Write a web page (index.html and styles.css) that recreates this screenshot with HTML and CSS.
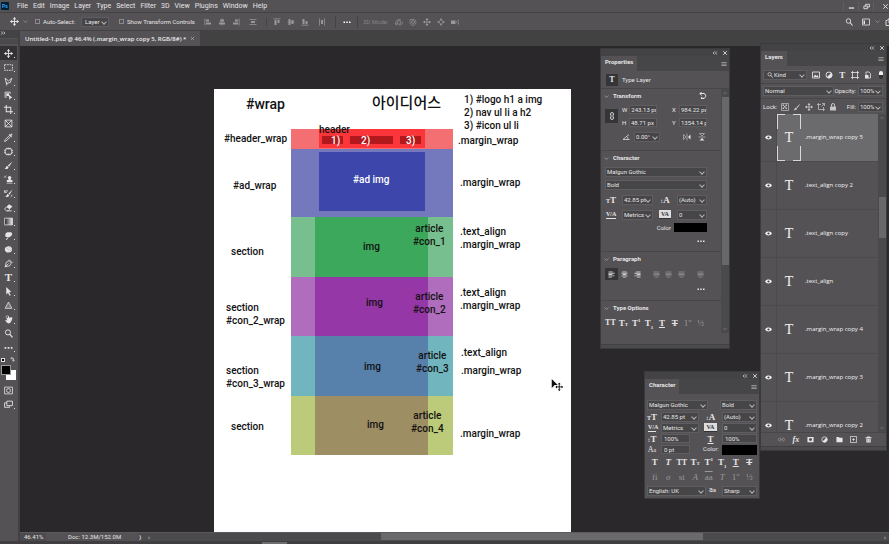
FILE: index.html
```html
<!DOCTYPE html>
<html lang="en">
<head>
<meta charset="utf-8">
<title>Untitled-1.psd</title>
<link rel="stylesheet" href="styles.css">
</head>
<body>
<svg class="defs" aria-hidden="true">
  <symbol id="move" viewBox="0 0 16 16"><path d="M8 1v14M1 8h14" stroke="currentColor" stroke-width="1.6"/><path d="M8 0l3 4H5zM8 16l3-4H5zM0 8l4-3v6zM16 8l-4-3v6z" fill="currentColor"/></symbol>
  <symbol id="slide" viewBox="0 0 16 16"><path d="M8 0l3 5H5zM8 16l3-5H5zM0 8l5-3v6zM16 8l-5-3v6z" fill="currentColor"/></symbol>
  <symbol id="marquee" viewBox="0 0 16 16"><path d="M1 3h14v10H1z" fill="none" stroke="currentColor" stroke-width="1.5" stroke-dasharray="3 1.5"/></symbol>
  <symbol id="lasso" viewBox="0 0 16 16"><path d="M5 13L2 2l6 5 6-5-3 8-5 1-2 4M6 11l-3-1" fill="none" stroke="currentColor" stroke-width="1.5"/></symbol>
  <symbol id="select" viewBox="0 0 16 16"><path d="M11 5V2H2v9h3" fill="none" stroke="currentColor" stroke-width="1.5"/><path d="M4 4h5v5H4z" fill="currentColor"/><path d="M8 6l7 6-3 .5L10 16z" fill="currentColor"/></symbol>
  <symbol id="crop" viewBox="0 0 16 16"><path d="M4 0v12h12M0 4h12v12" fill="none" stroke="currentColor" stroke-width="1.8"/></symbol>
  <symbol id="frame" viewBox="0 0 16 16"><path d="M2 2h12v12H2zM2 2l12 12M14 2L2 14" fill="none" stroke="currentColor" stroke-width="1.5"/></symbol>
  <symbol id="dropper" viewBox="0 0 16 16"><path d="M9 5l-7 7-1 3 3-1 7-7" fill="none" stroke="currentColor" stroke-width="1.5"/><path d="M8 3l5 5 1-2-1-1 2-3-1-1-3 2-1-1z" fill="currentColor"/></symbol>
  <symbol id="heal" viewBox="0 0 16 16"><rect x="2" y="3" width="12" height="10" rx="3" fill="none" stroke="currentColor" stroke-width="1.7"/><path d="M5 1v3M8 1v3M11 1v3M5 12v3M8 12v3M11 12v3M0 6h3M0 10h3M13 6h3M13 10h3" stroke="currentColor" stroke-width="1.2"/></symbol>
  <symbol id="brush" viewBox="0 0 16 16"><path d="M15 1L7 8l2 2zM6 9c-3 0-2 4-5 5 3 1 7 0 7-3z" fill="currentColor"/></symbol>
  <symbol id="stamp" viewBox="0 0 16 16"><path d="M8 7a3 3 0 1 1 4 0v2h3v4H5V9h3zM5 14h10v1H5z" fill="currentColor"/><path d="M0 1l4 4M4 1L0 5" stroke="currentColor"/></symbol>
  <symbol id="history" viewBox="0 0 16 16"><path d="M15 1L8 8l2 2zM7 9c-2 0-2 4-5 5 3 1 7 0 7-3z" fill="currentColor"/><path d="M1 6c1-3 4-4 6-2M1 2v4h4M12 14c2-1 2-3 2-4" fill="none" stroke="currentColor" stroke-width="1.4"/></symbol>
  <symbol id="eraser" viewBox="0 0 16 16"><path d="M9 2l6 4-5 5-6-4z" fill="currentColor"/><path d="M4 7l-3 4 4 3h3l2-3M5 14h9" fill="none" stroke="currentColor" stroke-width="1.4"/></symbol>
  <symbol id="gradient" viewBox="0 0 16 16"><linearGradient id="gr"><stop stop-color="#222"/><stop offset="1" stop-color="#eee"/></linearGradient><path d="M1 2h14v12H1z" fill="url(#gr)" stroke="currentColor" stroke-width="1.3"/></symbol>
  <symbol id="smudge" viewBox="0 0 16 16"><path d="M3 15l4-4-4-1c-2-3 0-8 4-8h6c3 3 1 6-2 8l-3 1-3 5z" fill="currentColor"/></symbol>
  <symbol id="sponge" viewBox="0 0 16 16"><path d="M2 5c4-4 11-4 12 1 1 4-1 7-5 7-5 2-9-3-7-8z" fill="currentColor"/><path d="M5 6h1M9 5h1M7 9h1M11 9h1" stroke="#555" stroke-width="1.3"/></symbol>
  <symbol id="pen" viewBox="0 0 16 16"><path d="M2 14l2-8 5-3 4 4-3 5zM2 14l6-6M9 1l6 6" fill="none" stroke="currentColor" stroke-width="1.5"/></symbol>
  <symbol id="arrow" viewBox="0 0 16 16"><path d="M4 0l9 9-4 .5 3 5-2 1-3-5-3 3z" fill="currentColor"/></symbol>
  <symbol id="triangle" viewBox="0 0 16 16"><path d="M8 2l6 11H2z" fill="#777" stroke="currentColor" stroke-width="1.4"/></symbol>
  <symbol id="hand" viewBox="0 0 16 16"><path d="M2 9c2-1 3 1 4 1L4 5c1-2 2 0 3 1V2c2-1 2 1 2 3 2-1 5-2 6 0-1 5-3 9-6 10-3 0-5-2-7-6z" fill="currentColor"/><path d="M2 4c2-3 5-3 6-2M12 10l-2 3" stroke="currentColor" fill="none"/></symbol>
  <symbol id="search" viewBox="0 0 16 16"><circle cx="7" cy="6" r="4.5" fill="none" stroke="currentColor" stroke-width="1.7"/><path d="M10 9l5 6" stroke="currentColor" stroke-width="2.2"/></symbol>
  <symbol id="dots" viewBox="0 0 16 16"><path d="M1 7h3v3H1zM6.500 7h3v3h-3zM12 7h3v3h-3z" fill="currentColor"/></symbol>
  <symbol id="mask" viewBox="0 0 16 16"><path d="M1 2h14v12H1z" fill="none" stroke="currentColor" stroke-width="1.4"/><circle cx="8" cy="8" r="3.500" fill="none" stroke="currentColor" stroke-width="1.4"/></symbol>
  <symbol id="screens" viewBox="0 0 16 16"><path d="M5 2h10v8H5zM5 5H1v8h9v-3" fill="none" stroke="currentColor" stroke-width="1.5"/></symbol>
  <symbol id="swap" viewBox="0 0 16 16"><path d="M4 4h7v8M7 0L3 4l4 4M7 9l4 5 4-5" fill="none" stroke="currentColor" stroke-width="2.2"/></symbol>
  <symbol id="al-l" viewBox="0 0 16 16"><path d="M1 1h1.500v14H1zM4 3h6v4H4zM4 9h10v4H4z" fill="currentColor"/></symbol>
  <symbol id="al-c" viewBox="0 0 16 16"><path d="M7.300 1h1.500v14H7.300zM4 3h8v4H4zM2 9h12v4H2z" fill="currentColor"/></symbol>
  <symbol id="al-r" viewBox="0 0 16 16"><path d="M13.500 1H15v14h-1.500zM6 3h6v4H6zM2 9h10v4H2z" fill="currentColor"/></symbol>
  <symbol id="al-h" viewBox="0 0 16 16"><path d="M1 2h14v1.500H1zM4 6h8v4H4zM1 12.500h14V14H1z" fill="currentColor"/></symbol>
  <symbol id="al-v" viewBox="0 0 16 16"><path d="M2 1h1.500v14H2zM6 4h4v8H6zM12.500 1H14v14h-1.500z" fill="currentColor"/></symbol>
  <symbol id="al-t" viewBox="0 0 16 16"><path d="M1 1h14v1.500H1zM3 4h4v10H3zM9 4h4v6H9z" fill="currentColor"/></symbol>
  <symbol id="al-m" viewBox="0 0 16 16"><path d="M1 7.300h14v1.500H1zM3 2h4v12H3zM9 4h4v8H9z" fill="currentColor"/></symbol>
  <symbol id="al-b" viewBox="0 0 16 16"><path d="M1 13.500h14V15H1zM3 2h4v10H3zM9 6h4v6H9z" fill="currentColor"/></symbol>
  <symbol id="orbit" viewBox="0 0 16 16"><circle cx="8" cy="9" r="3.500" fill="none" stroke="currentColor" stroke-width="1.4"/><path d="M2 12C-1 5 8 1 12 4M8 14c5 1 8-3 6-7M1 10l1 4 3-2" fill="none" stroke="currentColor" stroke-width="1.4"/></symbol>
  <symbol id="roll" viewBox="0 0 16 16"><circle cx="8" cy="8" r="3" fill="none" stroke="currentColor" stroke-width="1.4"/><path d="M2 3h4M2 3v4M2 8a6 6 0 1 0 4-5" fill="none" stroke="currentColor" stroke-width="1.4"/></symbol>
  <symbol id="camera" viewBox="0 0 16 16"><path d="M0 5h9v7H0z" fill="currentColor"/><path d="M10 8l5-4v9z" fill="none" stroke="currentColor"/></symbol>
  <symbol id="layout" viewBox="0 0 16 16"><path d="M1 2h14v12H1z" fill="none" stroke="currentColor" stroke-width="1.6"/><path d="M3 5h3v7H3z" fill="currentColor"/></symbol>
  <symbol id="share" viewBox="0 0 16 16"><path d="M5 5H2v10h12V8M8 10V1M5 4l3-3 3 3" fill="none" stroke="currentColor" stroke-width="1.8"/></symbol>
  <symbol id="min" viewBox="0 0 16 16"><path d="M2 10h12v3H2z" fill="currentColor"/></symbol>
  <symbol id="restore" viewBox="0 0 16 16"><path d="M2 7h8v6H2zM6 7V3h9v6h-5" fill="none" stroke="currentColor" stroke-width="2"/></symbol>
  <symbol id="x" viewBox="0 0 16 16"><path d="M3 3l10 10M13 3L3 13" stroke="currentColor" stroke-width="2.200"/></symbol>
  <symbol id="collapse" viewBox="0 0 16 16"><path d="M7 4L3 8l4 4M13 4L9 8l4 4" fill="none" stroke="currentColor" stroke-width="2"/></symbol>
  <symbol id="expand" viewBox="0 0 16 16"><path d="M3 4l4 4-4 4M9 4l4 4-4 4" fill="none" stroke="currentColor" stroke-width="2"/></symbol>
  <symbol id="menu" viewBox="0 0 16 16"><path d="M1 3h14v2H1zM1 7h14v2H1zM1 11h14v2H1z" fill="currentColor"/></symbol>
  <symbol id="down" viewBox="0 0 16 16"><path d="M2 5l6 6 6-6" fill="none" stroke="currentColor" stroke-width="2"/></symbol>
  <symbol id="up" viewBox="0 0 16 16"><path d="M2 11l6-6 6 6" fill="none" stroke="currentColor" stroke-width="2"/></symbol>
  <symbol id="reset" viewBox="0 0 16 16"><path d="M2 3h8a5 5 0 1 1-6 7M5 0L2 3l3 4" fill="none" stroke="currentColor" stroke-width="2"/><path d="M4 13h6" stroke="currentColor" stroke-width="2"/></symbol>
  <symbol id="chain" viewBox="0 0 16 16"><path d="M5 7V4a3 3 0 0 1 6 0v3M5 9v3a3 3 0 0 0 6 0V9M8 5v6" fill="none" stroke="currentColor" stroke-width="1.700"/></symbol>
  <symbol id="link" viewBox="0 0 16 16"><path d="M7 5H4a3 3 0 0 0 0 6h3M9 5h3a3 3 0 0 1 0 6H9M5 8h6" fill="none" stroke="currentColor" stroke-width="1.5"/></symbol>
  <symbol id="angle" viewBox="0 0 16 16"><path d="M14 3L2 13h13M9 7c2 1 3 3 3 6" fill="none" stroke="currentColor" stroke-width="1.5"/></symbol>
  <symbol id="flip-h" viewBox="0 0 16 16"><path d="M1 3l5 5-5 5z" fill="none" stroke="currentColor"/><path d="M7.500 1h1v14h-1zM15 3l-5 5 5 5z" fill="currentColor"/></symbol>
  <symbol id="flip-v" viewBox="0 0 16 16"><path d="M3 1l5 5 5-5z" fill="none" stroke="currentColor"/><path d="M1 7.500h14v1H1zM3 15l5-5 5 5z" fill="currentColor"/></symbol>
  <symbol id="tx-l" viewBox="0 0 16 16"><path d="M1 1h10v2H1zM1 4h14v2H1zM1 7h9v2H1zM1 10h14v2H1zM1 13h8v2H1z" fill="currentColor"/></symbol>
  <symbol id="tx-c" viewBox="0 0 16 16"><path d="M3 1h10v2H3zM1 4h14v2H1zM4 7h8v2H4zM1 10h14v2H1zM4 13h8v2H4z" fill="currentColor"/></symbol>
  <symbol id="tx-r" viewBox="0 0 16 16"><path d="M5 1h10v2H5zM1 4h14v2H1zM6 7h9v2H6zM1 10h14v2H1zM7 13h8v2H7z" fill="currentColor"/></symbol>
  <symbol id="tx-j" viewBox="0 0 16 16"><path d="M1 1h14v2H1zM1 4h14v2H1zM1 7h14v2H1zM1 10h14v2H1zM4 13h8v2H4z" fill="currentColor"/></symbol>
  <symbol id="image" viewBox="0 0 16 16"><path d="M1 2h14v12H1z" fill="none" stroke="currentColor" stroke-width="1.700"/><path d="M3 12l3-5 3 3 2-2 2 4z" fill="currentColor"/></symbol>
  <symbol id="adjust" viewBox="0 0 16 16"><circle cx="8" cy="8" r="6" fill="none" stroke="currentColor" stroke-width="1.800"/><path d="M12.500 3.500a6 6 0 0 1-9 9z" fill="currentColor"/></symbol>
  <symbol id="shape" viewBox="0 0 16 16"><path d="M3 0v16M13 0v16M0 3h16M0 13h16" fill="none" stroke="currentColor" stroke-width="1.600"/></symbol>
  <symbol id="smart" viewBox="0 0 16 16"><path d="M4 8V2h6l3 3v9H8" fill="none" stroke="currentColor" stroke-width="1.600"/><path d="M2 8h7v7H2z" fill="currentColor"/></symbol>
  <symbol id="checker" viewBox="0 0 16 16"><path d="M1 1h14v14H1z" fill="none" stroke="currentColor" stroke-width="1.400"/><path d="M3 3h3v3H3zM9 3h3v3H9zM6 6h3v3H6zM3 9h3v3H3zM9 9h3v3H9z" fill="currentColor"/></symbol>
  <symbol id="lock" viewBox="0 0 16 16"><path d="M5 7V4a3 3 0 0 1 6 0v3" fill="none" stroke="currentColor" stroke-width="2"/><path d="M2 7h12v8H2z" fill="currentColor"/></symbol>
  <symbol id="artlock" viewBox="0 0 16 16"><path d="M3 0v13h13M0 3h8M13 8v8M9 7l6-6M10 1h5v5" fill="none" stroke="currentColor" stroke-width="1.500"/></symbol>
  <symbol id="eye" viewBox="0 0 16 16"><path d="M0 8c4-6 12-6 16 0-4 6-12 6-16 0z" fill="currentColor"/><circle cx="8" cy="8" r="2.500" fill="#444"/></symbol>
  <symbol id="addmask" viewBox="0 0 16 16"><path fill-rule="evenodd" d="M1 2h14v12H1zM8 4.500a3.500 3.500 0 1 0 .01 0z" fill="currentColor"/></symbol>
  <symbol id="folder" viewBox="0 0 16 16"><path d="M1 2h5l2 2h7v10H1z" fill="currentColor"/></symbol>
  <symbol id="new" viewBox="0 0 16 16"><path d="M1 1h14v14H1zM8 5v6M5 8h6" fill="none" stroke="currentColor" stroke-width="1.700"/></symbol>
  <symbol id="trash" viewBox="0 0 16 16"><path d="M1 3h14v2H1zM5 1h6v2H5zM3 6h10v9H3z" fill="currentColor"/><path d="M6 7v6M10 7v6" stroke="#555"/></symbol>
  <symbol id="pointer" viewBox="0 0 16 16"><path d="M1 0l8 8H5l-4 4z" fill="#111"/><path d="M11 6v9M6.500 10.500h9" stroke="#111" stroke-width="1.200"/><path d="M11 5l2 2H9zM11 16l2-2H9zM6 10.500l2-2v4zM16 10.500l-2-2v4z" fill="#111"/></symbol>
</svg>

<header class="menubar">
  <span class="logo">Ps</span>
  <nav class="menus">
    <a href="#">File</a><a href="#">Edit</a><a href="#">Image</a><a href="#">Layer</a><a href="#">Type</a><a href="#">Select</a><a href="#">Filter</a><a href="#">3D</a><a href="#">View</a><a href="#">Plugins</a><a href="#">Window</a><a href="#">Help</a>
  </nav>
  <div class="window-buttons">
    <button aria-label="Minimize"><svg><use href="#min"/></svg></button>
    <button aria-label="Restore"><svg><use href="#restore"/></svg></button>
    <button aria-label="Close"><svg><use href="#x"/></svg></button>
  </div>
</header>

<div class="options">
  <svg class="icon-l"><use href="#move"/></svg>
  <svg class="chev"><use href="#down"/></svg>
  <label class="check auto"><input type="checkbox">Auto-Select:</label>
  <span class="pick opt-layer"><select aria-label="Auto-select target"><option>Layer</option></select></span>
  <label class="check show"><input type="checkbox">Show Transform Controls</label>
  <div class="tools-group first">
    <button aria-label="Align left"><svg><use href="#al-l"/></svg></button>
    <button aria-label="Align centers"><svg><use href="#al-c"/></svg></button>
    <button aria-label="Align right"><svg><use href="#al-r"/></svg></button>
  </div>
  <button class="spread" aria-label="Distribute"><svg><use href="#al-h"/></svg></button>
  <div class="tools-group second">
    <button aria-label="Align top"><svg><use href="#al-t"/></svg></button>
    <button aria-label="Align middle"><svg><use href="#al-m"/></svg></button>
    <button aria-label="Align bottom"><svg><use href="#al-b"/></svg></button>
  </div>
  <button class="spread" aria-label="Distribute horizontally"><svg><use href="#al-v"/></svg></button>
  <button class="more" aria-label="More options"><svg><use href="#dots"/></svg></button>
  <span class="mode">3D Mode:</span>
  <div class="tools-group">
    <button aria-label="Orbit"><svg><use href="#orbit"/></svg></button>
    <button aria-label="Roll"><svg><use href="#roll"/></svg></button>
    <button aria-label="Pan"><svg><use href="#move"/></svg></button>
    <button aria-label="Slide"><svg><use href="#slide"/></svg></button>
    <button aria-label="Camera"><svg><use href="#camera"/></svg></button>
  </div>
  <div class="right-tools">
    <button aria-label="Search"><svg><use href="#search"/></svg></button>
    <button aria-label="Workspace"><svg><use href="#layout"/></svg></button>
    <svg class="chev"><use href="#down"/></svg>
    <button class="share" aria-label="Share"><svg><use href="#share"/></svg></button>
  </div>
</div>

<div class="body">
  <aside class="toolbar">
    <div class="tool-head"><svg><use href="#expand"/></svg></div>
    <div class="grip"></div>
    <button class="tool on" aria-label="Move"><svg><use href="#move"/></svg></button>
    <button class="tool" aria-label="Marquee"><svg><use href="#marquee"/></svg></button>
    <button class="tool" aria-label="Lasso"><svg><use href="#lasso"/></svg></button>
    <button class="tool" aria-label="Object selection"><svg><use href="#select"/></svg></button>
    <button class="tool" aria-label="Crop"><svg><use href="#crop"/></svg></button>
    <button class="tool solo" aria-label="Frame"><svg><use href="#frame"/></svg></button>
    <button class="tool" aria-label="Eyedropper"><svg><use href="#dropper"/></svg></button>
    <button class="tool" aria-label="Healing"><svg><use href="#heal"/></svg></button>
    <button class="tool" aria-label="Brush"><svg><use href="#brush"/></svg></button>
    <button class="tool" aria-label="Stamp"><svg><use href="#stamp"/></svg></button>
    <button class="tool" aria-label="History brush"><svg><use href="#history"/></svg></button>
    <button class="tool" aria-label="Eraser"><svg><use href="#eraser"/></svg></button>
    <button class="tool" aria-label="Gradient"><svg><use href="#gradient"/></svg></button>
    <button class="tool" aria-label="Smudge"><svg><use href="#smudge"/></svg></button>
    <button class="tool" aria-label="Sponge"><svg><use href="#sponge"/></svg></button>
    <button class="tool" aria-label="Pen"><svg><use href="#pen"/></svg></button>
    <button class="tool letter">T</button>
    <button class="tool" aria-label="Path selection"><svg><use href="#arrow"/></svg></button>
    <button class="tool" aria-label="Triangle"><svg><use href="#triangle"/></svg></button>
    <button class="tool" aria-label="Hand"><svg><use href="#hand"/></svg></button>
    <button class="tool solo" aria-label="Zoom"><svg><use href="#search"/></svg></button>
    <button class="tool" aria-label="Edit toolbar"><svg><use href="#dots"/></svg></button>
    <div class="mini"><i class="mini-sw"></i><svg><use href="#swap"/></svg></div>
    <div class="swatches"><i class="bg"></i><i class="fg"></i></div>
    <button class="tool solo" aria-label="Quick mask"><svg><use href="#mask"/></svg></button>
    <button class="tool" aria-label="Screen mode"><svg><use href="#screens"/></svg></button>
  </aside>

  <main class="document">
    <div class="tabs"><div class="tab"><span>Untitled-1.psd @ 46.4% (.margin_wrap copy 5, RGB/8#) *</span><button aria-label="Close document"><svg><use href="#x"/></svg></button></div></div>
    <div class="workspace">
      <div class="artboard">
        <div class="diagram">
          <div class="band red"><div class="inner"><i></i><i></i><i></i></div></div>
          <div class="band indigo"><div class="inner"></div></div>
          <div class="band green"><div class="inner"></div></div>
          <div class="band purple"><div class="inner"></div></div>
          <div class="band blue"><div class="inner"></div></div>
          <div class="band olive"><div class="inner"></div></div>
        </div>
        <p class="note big n-wrap">#wrap</p>
        <p class="note big n-title" lang="ko">아이디어스</p>
        <p class="note n-list">1) #logo h1 a img<br>2) nav ul li a h2<br>3) #icon ul li</p>
        <p class="note n-header">header</p>
        <p class="note white n-one">1)</p><p class="note white n-two">2)</p><p class="note white n-three">3)</p>
        <p class="note n-hwrap">#header_wrap</p>
        <p class="note n-m1">.margin_wrap</p>
        <p class="note n-adwrap">#ad_wrap</p>
        <p class="note white n-ad">#ad img</p>
        <p class="note n-m2">.margin_wrap</p>
        <p class="note n-s1">section</p><p class="note n-i1">img</p><p class="note center n-c1">article<br>#con_1</p><p class="note n-t1">.text_align<br>.margin_wrap</p>
        <p class="note n-s2">section<br>#con_2_wrap</p><p class="note n-i2">img</p><p class="note center n-c2">article<br>#con_2</p><p class="note n-t2">.text_align<br>.margin_wrap</p>
        <p class="note n-s3">section<br>#con_3_wrap</p><p class="note n-i3">img</p><p class="note center n-c3">article<br>#con_3</p><p class="note n-t3">.text_align</p><p class="note n-m4">.margin_wrap</p>
        <p class="note n-s4">section</p><p class="note n-i4">img</p><p class="note center n-c4">article<br>#con_4</p><p class="note n-m5">.margin_wrap</p>
        <svg class="pointer"><use href="#pointer"/></svg>
      </div>
    </div>
    <footer class="status"><span class="zoom">46.41%</span><span class="doc">Doc: 12.3M/152.0M</span><span class="more-info">❭</span><span class="scroll-left">‹</span><div class="hscroll"><i></i></div><span class="scroll-right">›</span></footer>
  </main>
</div>
<div class="bottom"><i></i></div>

<section class="panel properties">
  <div class="panel-top"><svg><use href="#collapse"/></svg><svg><use href="#x"/></svg></div>
  <div class="panel-tabs"><h2>Properties</h2><svg><use href="#menu"/></svg></div>
  <div class="type-row"><b class="tbox">T</b>Type Layer</div>
  <div class="prop-body">
    <div class="prop-main">
      <section class="transform">
        <h3><svg><use href="#down"/></svg>Transform<svg class="reset"><use href="#reset"/></svg></h3>
        <div class="tf">
          <button class="chain" aria-label="Link size"><svg><use href="#chain"/></svg></button>
          <div class="fields">
            <label>W<input value="243.13 px"></label><label>X<input value="984.22 px"></label>
            <label>H<input value="48.71 px"></label><label>Y<input value="1354.14 px"></label>
          </div>
        </div>
        <div class="angle"><svg><use href="#angle"/></svg><span class="pick"><select aria-label="Angle"><option>0.00°</option></select></span><svg class="fh"><use href="#flip-h"/></svg><svg><use href="#flip-v"/></svg></div>
      </section>
      <section class="chars">
        <h3><svg><use href="#down"/></svg>Character</h3>
        <span class="pick wide"><select aria-label="Font"><option>Malgun Gothic</option></select></span>
        <span class="pick wide"><select aria-label="Weight"><option>Bold</option></select></span>
        <div class="pairs">
          <span class="gl"><small>T</small>T</span><span class="pick"><select aria-label="Size"><option>42.85 pt</option></select></span>
          <span class="gl"><small>↕</small>A</span><span class="pick"><select aria-label="Leading"><option>(Auto)</option></select></span>
          <span class="gl va">V/A</span><span class="pick"><select aria-label="Kerning"><option>Metrics</option></select></span>
          <span class="gl va inv">VA</span><span class="pick"><select aria-label="Tracking"><option>0</option></select></span>
        </div>
        <div class="color">Color<button aria-label="Text color"></button></div>
        <div class="dots"><svg><use href="#dots"/></svg></div>
      </section>
      <section class="para">
        <h3><svg><use href="#down"/></svg>Paragraph</h3>
        <div class="aligns">
          <button class="on" aria-label="Left"><svg><use href="#tx-l"/></svg></button><button aria-label="Center"><svg><use href="#tx-c"/></svg></button><button aria-label="Right"><svg><use href="#tx-r"/></svg></button>
          <button class="dim gap" aria-label="Justify left"><svg><use href="#tx-j"/></svg></button><button class="dim" aria-label="Justify center"><svg><use href="#tx-j"/></svg></button><button class="dim" aria-label="Justify right"><svg><use href="#tx-j"/></svg></button>
          <button class="dim gap" aria-label="Justify all"><svg><use href="#tx-j"/></svg></button>
        </div>
        <div class="dots"><svg><use href="#dots"/></svg></div>
      </section>
      <section class="topts">
        <h3><svg><use href="#down"/></svg>Type Options</h3>
        <div class="glyphs"><b>TT</b><b>T<small>T</small></b><b>T<sup>1</sup></b><b>T<sub>1</sub></b><b class="u">T</b><b class="s">T</b><span>1<sup>st</sup></span><span>½</span></div>
      </section>
    </div>
    <div class="vscroll"><svg><use href="#up"/></svg><i></i><svg class="end"><use href="#down"/></svg></div>
  </div>
  <div class="panel-grip"></div>
</section>

<section class="panel layers">
  <div class="panel-top"><svg><use href="#collapse"/></svg><svg><use href="#x"/></svg></div>
  <div class="panel-tabs"><h2>Layers</h2><svg><use href="#menu"/></svg></div>
  <div class="bar filter">
    <span class="pick kind"><svg><use href="#search"/></svg><select aria-label="Filter kind"><option>Kind</option></select></span>
    <svg><use href="#image"/></svg><svg><use href="#adjust"/></svg><b>T</b><svg><use href="#shape"/></svg><svg><use href="#smart"/></svg><i class="toggle"></i>
  </div>
  <div class="bar">
    <span class="pick blend"><select aria-label="Blend mode"><option>Normal</option></select></span>
    <label class="pct">Opacity:<span class="pick"><select><option>100%</option></select></span></label>
  </div>
  <div class="bar locks">
    <span>Lock:</span><svg><use href="#checker"/></svg><svg><use href="#brush"/></svg><svg><use href="#move"/></svg><svg><use href="#artlock"/></svg><svg><use href="#lock"/></svg>
    <label class="pct">Fill:<span class="pick"><select><option>100%</option></select></span></label>
  </div>
  <div class="layer-body">
    <ul>
      <li class="on"><button aria-label="Visibility"><svg><use href="#eye"/></svg></button><b class="thumb">T</b><span>.margin_wrap copy 5</span></li>
      <li><button aria-label="Visibility"><svg><use href="#eye"/></svg></button><b class="thumb">T</b><span>.text_align copy 2</span></li>
      <li><button aria-label="Visibility"><svg><use href="#eye"/></svg></button><b class="thumb">T</b><span>.text_align copy</span></li>
      <li><button aria-label="Visibility"><svg><use href="#eye"/></svg></button><b class="thumb">T</b><span>.text_align</span></li>
      <li><button aria-label="Visibility"><svg><use href="#eye"/></svg></button><b class="thumb">T</b><span>.margin_wrap copy 4</span></li>
      <li><button aria-label="Visibility"><svg><use href="#eye"/></svg></button><b class="thumb">T</b><span>.margin_wrap copy 3</span></li>
      <li><button aria-label="Visibility"><svg><use href="#eye"/></svg></button><b class="thumb">T</b><span>.margin_wrap copy 2</span></li>
    </ul>
    <div class="vscroll"><svg><use href="#up"/></svg><i></i><svg class="end"><use href="#down"/></svg></div>
  </div>
  <div class="layer-foot">
    <svg class="dim"><use href="#link"/></svg><em>fx</em><svg><use href="#addmask"/></svg><svg><use href="#adjust"/></svg><svg><use href="#folder"/></svg><svg><use href="#new"/></svg><svg><use href="#trash"/></svg>
  </div>
  <div class="panel-grip"></div>
</section>

<section class="panel character">
  <div class="panel-top"><svg><use href="#collapse"/></svg><svg><use href="#x"/></svg></div>
  <div class="panel-tabs"><h2>Character</h2><svg><use href="#menu"/></svg></div>
  <div class="char-body">
    <div class="fonts"><span class="pick"><select aria-label="Font family"><option>Malgun Gothic</option></select></span><span class="pick"><select aria-label="Font style"><option>Bold</option></select></span></div>
    <div class="grid">
      <span class="gl"><small>T</small>T</span><span class="pick"><select aria-label="Font size"><option>42.85 pt</option></select></span>
      <span class="gl"><small>↕</small>A</span><span class="pick"><select aria-label="Line spacing"><option>(Auto)</option></select></span>
      <span class="gl va">V/A</span><span class="pick"><select aria-label="Pair kerning"><option>Metrics</option></select></span>
      <span class="gl va inv">VA</span><span class="pick"><select aria-label="Letter tracking"><option>0</option></select></span>
      <span class="gl"><small>↕</small>T</span><input aria-label="Vertical scale" class="short" value="100%">
      <span class="gl u">T</span><input aria-label="Horizontal scale" value="100%">
      <span class="gl shift">A<small>a</small></span><input aria-label="Baseline shift" class="short" value="0 pt">
      <span class="lab">Color:</span><button class="swatch" aria-label="Color"></button>
    </div>
    <div class="glyphs"><b>T</b><b><em>T</em></b><b>TT</b><b>T<small>T</small></b><b>T<sup>1</sup></b><b>T<sub>1</sub></b><b class="u">T</b><b class="s">T</b></div>
    <div class="glyphs faint"><span>fi</span><span><em>σ</em></span><span>st</span><span><em>A</em></span><span class="o">aa</span><span><em>T</em></span><span>1<sup>st</sup></span><span>½</span></div>
    <div class="lang"><span class="pick"><select aria-label="Language"><option>English: UK</option></select></span><span class="aa">a<small>a</small></span><span class="pick"><select aria-label="Anti-aliasing"><option>Sharp</option></select></span></div>
  </div>
</section>
</body>
</html>
```
FILE: styles.css
```css
* { box-sizing: border-box; margin: 0; padding: 0; }
:root {
  --bar: #545255;
  --dark: #434244;
  --field: #464547;
  --line: #474648;
  --text: #e6e5e6;
  --glyph: "Liberation Serif", serif;
}
body {
  min-height: 100vh; display: flex; flex-direction: column; overflow: hidden;
  font: 6px/8px Roboto, "Noto Sans CJK KR", sans-serif;
  color: var(--text); background: #2a282b;
}
.defs { position: absolute; width: 0; height: 0; }
svg { width: 8px; height: 8px; display: block; flex: none; }
button, input, select { font: inherit; color: inherit; background: none; border: 0; border-radius: 0; appearance: none; min-width: 0; }
button { display: flex; align-items: center; justify-content: center; }
a { color: inherit; text-decoration: none; }
ul { list-style: none; }
i { display: block; font-style: normal; }

/* menu bar */
.menubar { height: 12px; display: flex; align-items: center; background: var(--bar); font-size: 7px; }
.logo { width: 8px; height: 8px; margin-left: 1px; background: #001e36; color: #31a8ff; font-size: 5px; font-weight: 700; line-height: 8px; text-align: center; border-radius: 1px; }
.menus { display: flex; gap: 5px; margin-left: 8px; }
.window-buttons { display: flex; margin-left: auto; }
.window-buttons button { width: 15px; height: 9px; border-left: 1px solid #605e61; }
.window-buttons button:last-child { width: 16px; padding-left: 7px; }
.window-buttons svg { width: 7px; height: 7px; }

/* options bar */
.options { height: 18px; display: flex; align-items: center; background: var(--bar); border-top: 1px solid #434144; }
.options .icon-l { width: 9px; height: 9px; margin-left: 10px; }
.chev { width: 5px; height: 5px; margin-left: 4px; opacity: .6; }
.check { display: flex; align-items: center; gap: 3px; white-space: nowrap; }
.check input { width: 5px; height: 5px; border: 1px solid #8b898c; }
.auto { margin-left: 7px; width: 46px; }
.show { margin-left: 10px; width: 78px; }
.tools-group { display: flex; gap: 6px; color: #99979a; }
.tools-group.first { margin-left: 7px; }
.tools-group.second { border-left: 1px solid var(--dark); padding-left: 6px; }
.spread { width: 26px; color: #99979a; }
.more { width: 23px; height: 12px; border: solid var(--dark); border-width: 0 1px; color: #fff; }
.mode { width: 37px; padding-left: 5px; color: #858386; }
.right-tools { display: flex; align-items: center; gap: 9px; margin-left: auto; }
.right-tools .chev { margin-left: -4px; }
.right-tools .share { width: 4px; margin-left: -4px; overflow: hidden; justify-content: flex-start; }

/* drop-downs */
.pick { position: relative; display: flex; align-items: center; height: 10px; background: var(--field); border: 1px solid #5f5d60; min-width: 0; }
.pick select { width: 100%; height: 8px; padding: 0 0 0 1px; line-height: 8px; }
.pick::after { content: ""; position: absolute; right: 2px; top: 2px; width: 3px; height: 3px; border: solid #b5b4b6; border-width: 0 1px 1px 0; transform: rotate(45deg); }
.opt-layer { width: 28px; }
.opt-layer select { padding-left: 3px; }

/* body */
.body { flex: 1; display: flex; min-height: 0; }
.toolbar { width: 20px; background: var(--bar); border-right: 2px solid #404143; }
.tool-head { height: 8px; background: var(--dark); }
.tool-head svg { width: 6px; height: 6px; }
.grip { height: 8px; border-bottom: 2px solid var(--bar); border-top: 1px solid var(--bar); background: #4b494c; }
.tool { position: relative; width: 17px; height: 14px; }
.tool svg { width: 9px; height: 9px; }
.tool.on { background: #333134; }
.tool:not(.solo)::after { content: ""; position: absolute; right: 2px; bottom: 2px; width: 1px; height: 1px; background: #ddd; }
.tool.letter { font: 700 11px/14px var(--glyph); }
.mini { display: flex; align-items: center; justify-content: space-between; height: 11px; padding: 0 3px 0 1px; }
.mini svg { width: 5px; height: 5px; }
.mini-sw { width: 4px; height: 4px; background: #000; border: 1px solid #ddd; }
.swatches { display: grid; grid-template-columns: 5px 5px 5px; grid-template-rows: 5px 5px 5px; height: 18px; padding-left: 1px; }
.fg { grid-area: 1 / 1 / 3 / 3; background: #000; border: 1px solid #999; }
.bg { grid-area: 2 / 2 / 4 / 4; background: #fff; }

.document { flex: 1; display: flex; flex-direction: column; min-width: 0; }
.tabs { height: 16px; background: #424242; display: flex; padding-top: 1px; }
.tab { display: flex; align-items: center; gap: 4px; padding: 0 5px; background: var(--bar); font-family: "Open Sans", sans-serif; font-weight: 600; color: #eee; white-space: nowrap; }
.tab svg { width: 5px; height: 5px; opacity: .6; }
.workspace { flex: 1; background: #2a282b; min-height: 0; display: flex; padding: 43px 0 0 194px; }

/* artboard */
.artboard { position: relative; width: 357px; background: #fff; padding: 40px 118px 0 77px; }
.band { display: flex; justify-content: center; height: 60px; padding-right: 1px; }
.inner { width: 113px; }
.red { height: 20px; background: #f36f71; }
.red .inner { width: 106px; height: 19px; padding: 7px 4px 0 3px; display: flex; justify-content: space-between; background: #fb3539; }
.red i { width: 21px; height: 8px; background: #b2191d; }
.red i:nth-child(2) { width: 43px; }
.indigo { height: 68px; background: #7479be; padding-top: 3px; }
.indigo .inner { width: 106px; height: 59px; background: #3d46aa; }
.green { background: #77bf8e; } .green .inner { background: #3ca85b; }
.purple { height: 59px; background: #b06dbd; } .purple .inner { background: #9537a6; }
.blue { background: #71b6bf; } .blue .inner { background: #5780aa; }
.olive { height: 59px; background: #bccb79; } .olive .inner { background: #9d8e63; }
.note { position: absolute; color: #111; font: 500 10px/13px Roboto, "Noto Sans CJK KR", sans-serif; white-space: nowrap; }
.note.big { font-size: 14px; line-height: 18px; }
.note.white { color: #fff; }
.note.center { text-align: center; }
.n-wrap { left: 32px; top: 6px; }
.note.n-title { left: 158px; top: 5px; font-size: 15px; }
.n-list { left: 250px; top: 4px; }
.n-header { left: 105px; top: 34px; }
.n-one { left: 117px; top: 45px; }
.n-two { left: 147px; top: 45px; }
.n-three { left: 192px; top: 45px; }
.n-hwrap { left: 10px; top: 43px; }
.n-m1 { left: 244px; top: 45px; }
.n-adwrap { left: 19px; top: 90px; }
.n-ad { left: 139px; top: 84px; }
.n-m2 { left: 246px; top: 87px; }
.n-s1 { left: 17px; top: 156px; }
.n-i1 { left: 149px; top: 151px; }
.n-c1 { left: 199px; top: 133px; }
.n-t1 { left: 246px; top: 136px; }
.n-s2 { left: 12px; top: 212px; }
.n-i2 { left: 152px; top: 207px; }
.n-c2 { left: 199px; top: 201px; }
.n-t2 { left: 246px; top: 197px; }
.n-s3 { left: 12px; top: 275px; }
.n-i3 { left: 150px; top: 271px; }
.n-c3 { left: 202px; top: 260px; }
.n-t3 { left: 247px; top: 257px; }
.n-m4 { left: 247px; top: 275px; }
.n-s4 { left: 17px; top: 331px; }
.n-i4 { left: 153px; top: 329px; }
.n-c4 { left: 197px; top: 320px; }
.n-m5 { left: 246px; top: 338px; }
.pointer { position: absolute; left: 337px; top: 290px; width: 12px; height: 12px; }

/* status */
.status { height: 9px; display: flex; align-items: center; background: #4b4a4c; border-top: 1px solid #5a595b; }
.zoom { width: 26px; padding-left: 4px; }
.doc { width: 92px; padding-left: 22px; background: var(--bar); }
.more-info { width: 10px; font-size: 5px; }
.scroll-left { width: 20px; }
.hscroll { flex: 1; height: 8px; padding-left: 213px; }
.hscroll i { width: 64%; height: 7px; background: #6a696b; }
.scroll-right { width: 5px; }
.bottom { height: 3px; background: #403e41; padding-left: 262px; }
.bottom i { width: 25px; height: 2px; margin-top: 1px; background: #6e6c6f; }

/* floating panels */
.panel { position: absolute; background: var(--bar); border: 1px solid #3b3a3c; }
.panel-top { height: 7px; display: flex; justify-content: flex-end; align-items: center; gap: 4px; padding-right: 1px; background: var(--dark); }
.panel-top svg { width: 6px; height: 6px; }
.panel-tabs { height: 15px; display: flex; align-items: center; justify-content: space-between; padding-right: 2px; background: #464547; }
.panel-tabs h2 { height: 15px; font: 700 6px/12px Roboto, sans-serif; padding: 0 4px; background: var(--bar); }
.panel-tabs svg { width: 6px; height: 6px; color: #aaa; }
.panel-grip { height: 4px; margin-top: auto; background: #4b4a4c; border-top: 1px solid #403f41; }
.panel input { background: var(--field); border: 1px solid #5f5d60; height: 9px; padding-left: 2px; width: 100%; }
.panel h3 { display: flex; align-items: center; gap: 4px; height: 14px; margin-bottom: 2px; font: 700 6px/14px Roboto, sans-serif; padding-left: 3px; }
.panel h3 svg { width: 5px; height: 5px; opacity: .7; }
.vscroll { width: 8px; display: flex; flex-direction: column; align-items: center; background: #4a494b; }
.vscroll svg { width: 4px; height: 4px; margin: 2px 0; opacity: .6; }
.vscroll i { width: 7px; background: #686769; }
.vscroll .end { margin-top: auto; }
.gl { font: 700 9px/10px var(--glyph); text-align: center; white-space: nowrap; }
.gl small { font-size: 6px; }
.gl.va { font-size: 6px; line-height: 8px; border-bottom: 1px solid; height: 9px; margin: 0 1px; }
.gl.inv { background: #ddd; color: #333; }
.gl.shift { font-weight: 400; font-size: 8px; }
.u { text-decoration: underline; }
.s { text-decoration: line-through; }

.properties { right: 159px; top: 48px; width: 130px; height: 301px; display: flex; flex-direction: column; }
.type-row { height: 18px; display: flex; align-items: center; gap: 4px; padding-left: 5px; border-bottom: 1px solid var(--line); }
.tbox { width: 12px; height: 12px; background: #353436; font: 700 8px/12px var(--glyph); text-align: center; }
.prop-body { display: flex; height: 244px; }
.prop-main { flex: 1; min-width: 0; }
.prop-main section { border-bottom: 1px solid var(--line); padding-right: 14px; }
.prop-main .topts { border: 0; }
.transform { height: 62px; }
.panel h3 .reset { width: 8px; height: 8px; margin-left: auto; opacity: 1; }
.tf { display: flex; gap: 4px; padding-left: 4px; align-items: center; }
.chain { width: 13px; height: 14px; background: #353436; }
.fields { flex: 1; display: grid; grid-template-columns: 35px 35px; justify-content: space-between; gap: 4px 8px; }
.fields label { display: flex; align-items: center; gap: 2px; }
.fields input { width: 28px; padding-left: 1px; margin-left: auto; flex: none; }
.angle { display: flex; align-items: center; gap: 4px; padding: 5px 0 0 21px; }
.angle .pick { width: 26px; }
.angle .fh { margin-left: 19px; }
.angle svg:last-child { margin-left: 3px; }
.chars { height: 101px; }
.wide { margin: 0 0 3px 4px; }
.pairs { display: grid; grid-template-columns: 12px 31px 14px 30px; column-gap: 1px; row-gap: 4px; justify-content: space-between; padding: 2px 0 3px 4px; }
.color { display: flex; justify-content: flex-end; align-items: center; gap: 3px; }
.color button { width: 33px; height: 9px; background: #000; }
.dots { display: flex; justify-content: flex-end; padding: 5px 2px 0 0; }
.para { height: 49px; }
.aligns { display: flex; padding-left: 4px; align-items: center; }
.aligns button { width: 13px; height: 12px; }
.aligns button svg { width: 7px; height: 7px; color: #ccc; }
.aligns .on { background: #353436; }
.aligns .dim svg { color: #858487; }
.aligns .gap { margin-left: 6px; }
.glyphs { display: grid; grid-template-columns: repeat(8, 1fr); font: 700 9px/12px var(--glyph); text-align: center; white-space: nowrap; }
.glyphs sup, .glyphs sub, .glyphs small { font-size: 5px; line-height: 1px; }
.glyphs span { font-weight: 400; color: #9a999b; }
.glyphs .o { text-decoration: overline; }
.glyphs b:nth-child(3):not(:has(sup)), .topts b:first-child { font-size: 8px; }
.topts .glyphs { padding-left: 3px; }
.properties .vscroll i { height: 168px; }

.layers { right: 2px; top: 43px; width: 127px; height: 408px; display: flex; flex-direction: column; }
.bar { height: 15px; display: flex; align-items: center; padding: 0 3px 0 2px; border-bottom: 1px solid var(--line); }
.filter { height: 18px; gap: 5px; }
.kind { width: 45px; }
.kind svg { width: 6px; height: 6px; margin-left: 3px; }
.filter b { font: 700 9px/10px var(--glyph); width: 8px; text-align: center; }
.toggle { width: 4px; height: 8px; margin-left: 2px; background: #333; border-radius: 2px; border-top: 4px solid #eee; }
.blend { width: 71px; }
.pct { display: flex; align-items: center; gap: 2px; margin-left: auto; }
.pct .pick { width: 25px; }
.locks { gap: 4px; border: 0; }
.locks svg { width: 8px; height: 8px; color: #c5c4c6; }
.layer-body { flex: 1; display: flex; min-height: 0; }
.layer-body ul { flex: 1; overflow: hidden; min-width: 0; font-family: "Open Sans", sans-serif; color: #f2f2f2; }
.layer-body li { display: flex; align-items: center; height: 48px; border-bottom: 1px solid #4b4a4c; }
.layer-body li > button { width: 16px; height: 100%; border-right: 1px solid #4b4a4c; }
.layer-body li svg { width: 7px; height: 7px; }
.layer-body li span { padding-left: 4px; flex: 1; line-height: 47px; white-space: nowrap; }
.thumb { width: 24px; height: 47px; font: 400 14px/47px var(--glyph); text-align: center; flex: none; }
.on .thumb, .layer-body .on span { background: #6b6a6c; }
.on .thumb {
  --c: #d8d7d9;
  background:
    linear-gradient(var(--c) 0 0) 0 0 / 8px 1px, linear-gradient(var(--c) 0 0) 0 0 / 1px 15px,
    linear-gradient(var(--c) 0 0) 100% 0 / 8px 1px, linear-gradient(var(--c) 0 0) 100% 0 / 1px 15px,
    linear-gradient(var(--c) 0 0) 0 100% / 8px 1px, linear-gradient(var(--c) 0 0) 0 100% / 1px 15px,
    linear-gradient(var(--c) 0 0) 100% 100% / 8px 1px, linear-gradient(var(--c) 0 0) 100% 100% / 1px 15px, #6b6a6c;
  background-repeat: no-repeat;
}
.layers .vscroll i { height: 41px; margin-top: 75px; }
.layer-foot { height: 14px; display: flex; align-items: center; justify-content: space-between; padding: 0 14px 0 17px; border-top: 1px solid var(--line); }
.layer-foot svg { width: 7px; height: 7px; }
.layer-foot .dim { opacity: .5; }
.layer-foot em { font: italic 700 8px/10px var(--glyph); }

.character { right: 129px; top: 371px; width: 116px; height: 128px; }
.char-body { padding: 6px 2px 0; }
.fonts { display: grid; grid-template-columns: 61px 37px; justify-content: space-between; margin-bottom: 2px; }
.grid { display: grid; grid-template-columns: 10px 38px 15px 35px; column-gap: 1px; row-gap: 1px; justify-content: space-between; }
.grid > * { height: 10px; }
.grid .short { width: 29px; }
.grid .lab { text-align: right; }
.swatch { background: #000; }
.character .glyphs { padding: 1px 1px 0; line-height: 13px; }
.character .faint { padding-top: 2px; }
.lang { display: grid; grid-template-columns: 59px 10px 35px; justify-content: space-between; margin-top: 2px; }
.aa { font-size: 7px; line-height: 8px; }
.aa small { font-size: 6px; }
```
